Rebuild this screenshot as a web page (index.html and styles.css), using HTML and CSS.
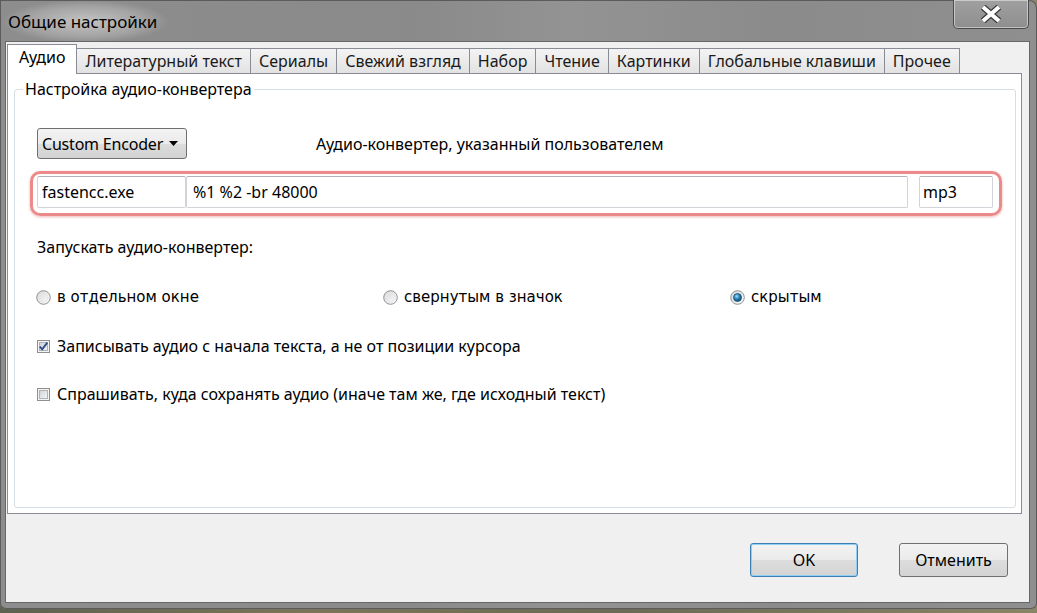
FILE: index.html
```html
<!DOCTYPE html>
<html lang="ru">
<head>
  <meta charset="UTF-8">
  <title>Общие настройки</title>
  <link rel="stylesheet" href="styles.css">
</head>
<body>
  <div class="window">
    <div class="titlebar">
      <span class="title">Общие настройки</span>
      <button class="close" title="Закрыть">
        <svg width="26" height="18" viewBox="0 0 26 18">
          <path d="M5 2 L21 16 M21 2 L5 16" stroke="#3a3a3a" stroke-width="6.5" />
          <path d="M5 2 L21 16 M21 2 L5 16" stroke="#ffffff" stroke-width="4" />
        </svg>
      </button>
    </div>

    <div class="client">
      <div class="tabs">
        <div class="tab active">Аудио</div>
        <div class="tab">Литературный текст</div>
        <div class="tab">Сериалы</div>
        <div class="tab">Свежий взгляд</div>
        <div class="tab">Набор</div>
        <div class="tab">Чтение</div>
        <div class="tab">Картинки</div>
        <div class="tab">Глобальные клавиши</div>
        <div class="tab">Прочее</div>
      </div>

      <div class="panel">
        <fieldset class="group">
          <legend>Настройка аудио-конвертера</legend>
          <div class="group-body">

            <div class="encoder-row">
              <div class="combo">
                <span class="combo-text">Custom Encoder</span>
                <svg class="combo-arrow" width="9" height="5" viewBox="0 0 9 5">
                  <polygon points="0,0 9,0 4.5,5" fill="#000" />
                </svg>
              </div>
              <span class="encoder-note">Аудио-конвертер, указанный пользователем</span>
            </div>

            <div class="cmd-box">
              <input class="field field-exe" type="text" value="fastencc.exe">
              <input class="field field-args" type="text" value="%1 %2 -br 48000">
              <input class="field field-ext" type="text" value="mp3">
            </div>

            <div class="run-label">Запускать аудио-конвертер:</div>

            <div class="radios">
              <label class="radio">
                <svg width="15" height="15" viewBox="0 0 15 15">
                  <defs>
                    <linearGradient id="rg" x1="0" y1="0" x2="1" y2="1">
                      <stop offset="0" stop-color="#d5d5d5" />
                      <stop offset="1" stop-color="#ffffff" />
                    </linearGradient>
                  </defs>
                  <circle cx="7.5" cy="7.5" r="6.8" fill="url(#rg)" stroke="#8d9297" stroke-width="1" />
                  <circle cx="7.5" cy="7.5" r="4.5" fill="none" stroke="#e6e6e6" stroke-width="1" />
                </svg>
                <span>в отдельном окне</span>
              </label>
              <label class="radio">
                <svg width="15" height="15" viewBox="0 0 15 15">
                  <circle cx="7.5" cy="7.5" r="6.8" fill="url(#rg)" stroke="#8d9297" stroke-width="1" />
                  <circle cx="7.5" cy="7.5" r="4.5" fill="none" stroke="#e6e6e6" stroke-width="1" />
                </svg>
                <span>свернутым в значок</span>
              </label>
              <label class="radio">
                <svg width="15" height="15" viewBox="0 0 15 15">
                  <defs>
                    <radialGradient id="dot" cx="0.4" cy="0.35" r="0.7">
                      <stop offset="0" stop-color="#9fe2ff" />
                      <stop offset="0.45" stop-color="#2a8ac4" />
                      <stop offset="1" stop-color="#0b3f66" />
                    </radialGradient>
                  </defs>
                  <circle cx="7.5" cy="7.5" r="6.8" fill="url(#rg)" stroke="#8d9297" stroke-width="1" />
                  <circle cx="7.5" cy="7.5" r="4" fill="url(#dot)" stroke="#274e6e" stroke-width="0.8" />
                </svg>
                <span>скрытым</span>
              </label>
            </div>

            <label class="check check-first">
              <svg width="13" height="13" viewBox="0 0 13 13">
                <defs>
                  <linearGradient id="cg" x1="0" y1="0" x2="1" y2="1">
                    <stop offset="0" stop-color="#cfd2d6" />
                    <stop offset="1" stop-color="#f7f7f7" />
                  </linearGradient>
                </defs>
                <rect x="0.5" y="0.5" width="12" height="12" fill="#f4f4f4" stroke="#8e8f8f" />
                <rect x="2.5" y="2.5" width="8" height="8" fill="url(#cg)" stroke="#aeb3b9" />
                <path d="M2.8 6.6 L5.2 9.3 L10.3 2.6" fill="none" stroke="#2d4f86" stroke-width="1.9" />
              </svg>
              <span>Записывать аудио с начала текста, а не от позиции курсора</span>
            </label>

            <label class="check check-second">
              <svg width="13" height="13" viewBox="0 0 13 13">
                <rect x="0.5" y="0.5" width="12" height="12" fill="#f4f4f4" stroke="#8e8f8f" />
                <rect x="2.5" y="2.5" width="8" height="8" fill="url(#cg)" stroke="#aeb3b9" />
              </svg>
              <span>Спрашивать, куда сохранять аудио (иначе там же, где исходный текст)</span>
            </label>

          </div>
        </fieldset>
      </div>

      <div class="actions">
        <button class="btn btn-default">OK</button>
        <button class="btn">Отменить</button>
      </div>
    </div>
  </div>
</body>
</html>
```

FILE: styles.css
```css
/* Desktop behind the dialog */
body {
  margin: 0;
  width: 1037px;
  height: 613px;
  overflow: hidden;
  font-family: "Noto Sans", "DejaVu Sans", sans-serif;
  background: linear-gradient(90deg, #5e6250, #7b745a 30%, #6a6a56 60%, #8a8468);
}

/* Window frame */
.window {
  height: 609px;
  box-sizing: border-box;
  padding: 0 8px 7px 6px;
  display: flex;
  flex-direction: column;
  background: linear-gradient(90deg, #8d8d8d, #8a8a8a 40%, #939393 55%, #8b8b8b 75%, #8f8f8f);
  border-radius: 0 8px 6px 6px;
  box-shadow: inset 0 0 0 1px #5b5b5b;
}

.titlebar {
  height: 42px;
  display: flex;
  align-items: flex-start;
}

.title {
  margin-left: -4px;
  padding: 1px 12px 0 6px;
  line-height: 42px;
  font-size: 17px;
  color: #000;
  background: radial-gradient(closest-side, rgba(205, 205, 205, 0.85), rgba(205, 205, 205, 0.35) 70%, rgba(205, 205, 205, 0));
}

.close {
  margin-left: auto;
  width: 76px;
  height: 29px;
  padding: 0;
  border: 1px solid #4c4c4c;
  border-top: none;
  border-radius: 0 0 5px 5px;
  background: linear-gradient(#a0a0a0, #8e8e8e);
  box-shadow: inset 0 0 0 1px rgba(255, 255, 255, 0.45);
  display: flex;
  align-items: center;
  justify-content: center;
}

/* Client area */
.client {
  flex: 1;
  display: flex;
  flex-direction: column;
  padding: 0 7px 0 1px;
  background: #f0f0f0;
  box-shadow: 0 0 0 1px #676767;
}

.tabs {
  height: 31px;
  display: flex;
  align-items: flex-end;
}

.tab {
  height: 25px;
  box-sizing: border-box;
  padding: 0 8px;
  margin-right: -1px;
  border: 1px solid #898c95;
  border-bottom: none;
  background: linear-gradient(#f3f3f3, #ebebeb 50%, #e2e2e2);
  font-size: 16px;
  line-height: 24px;
  color: #1a1a1a;
  white-space: nowrap;
}

.tab.active {
  position: relative;
  z-index: 1;
  height: 30px;
  margin-bottom: -1px;
  padding: 0 11px;
  background: #fff;
  line-height: 25px;
  color: #000;
}

.panel {
  height: 441px;
  box-sizing: border-box;
  display: flex;
  flex-direction: column;
  border: 1px solid #898c95;
  background: #fff;
}

.group {
  flex: 1;
  min-width: 0;
  margin: 6px 5px 5px 6px;
  padding: 0;
  border: 1px solid #d5dfe5;
  border-radius: 3px;
}

.group legend {
  margin-left: 8px;
  padding: 0 2px;
  font-size: 16px;
  line-height: 18px;
  color: #000;
}

.group-body {
  padding: 30px 13px 0 22px;
  font-size: 16px;
  color: #000;
}

.encoder-row {
  display: flex;
  align-items: center;
  gap: 129px;
}

.combo {
  width: 150px;
  height: 31px;
  box-sizing: border-box;
  display: flex;
  align-items: center;
  padding: 0 8px 0 4px;
  border: 1px solid #707070;
  border-radius: 3px;
  background: linear-gradient(#f3f3f3, #ebebeb 50%, #dddddd 51%, #d2d2d2);
}

.combo-text {
  white-space: nowrap;
  letter-spacing: -0.2px;
}

.combo-arrow {
  margin-left: auto;
  flex-shrink: 0;
}

/* Command line fields (highlighted) */
.cmd-box {
  margin: 12px 0 0 -7px;
  padding: 2px 6px 5px 4px;
  display: flex;
  border: 3px solid #ec8a8a;
  border-radius: 10px;
  box-shadow: 0 1px 3px rgba(210, 80, 80, 0.4);
}

.field {
  height: 32px;
  box-sizing: border-box;
  margin: 0;
  padding: 0 4px;
  border: 1px solid #d0d3d8;
  border-top-color: #b0b3b9;
  border-radius: 2px;
  background: #fff;
  font-family: "Noto Sans", "DejaVu Sans", sans-serif;
  font-size: 16px;
  color: #000;
  outline: none;
}

.field-exe {
  width: 149px;
}

.field-args {
  flex: 1;
  min-width: 0;
  padding-left: 6px;
}

.field-ext {
  width: 74px;
  margin-left: 11px;
  padding-left: 3px;
}

.run-label {
  margin-top: 21px;
  line-height: 20px;
}

.radios {
  margin-top: 30px;
  display: grid;
  grid-template-columns: 347px 347px auto;
  font-family: "DejaVu Sans", sans-serif;
  font-size: 15px;
}

.radio,
.check {
  display: flex;
  align-items: center;
  height: 20px;
}

.radio {
  gap: 6px;
  margin-left: -1px;
}

.check {
  gap: 7px;
}

.check-first {
  margin-top: 29px;
}

.check-second {
  margin-top: 28px;
}

/* Dialog buttons */
.actions {
  margin-top: 29px;
  padding-right: 14px;
  display: flex;
  justify-content: flex-end;
  gap: 41px;
}

.btn {
  width: 109px;
  height: 34px;
  border: 1px solid #707070;
  border-radius: 3px;
  background: linear-gradient(#f3f3f3, #ebebeb 50%, #dddddd 51%, #d3d3d3);
  font-family: "Noto Sans", "DejaVu Sans", sans-serif;
  font-size: 16px;
  color: #000;
}

.btn-default {
  width: 108px;
  border-color: #3c7fb1;
  box-shadow: inset 0 0 0 1px #8fd0f2;
}
```
